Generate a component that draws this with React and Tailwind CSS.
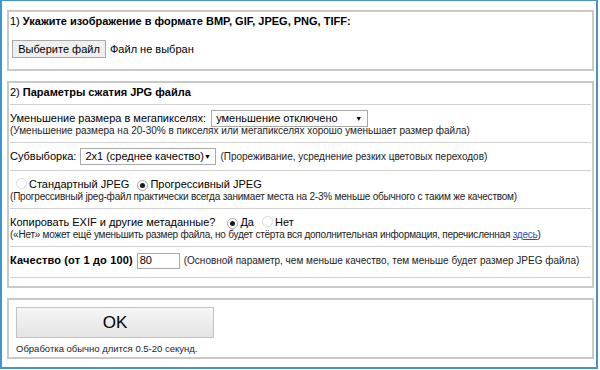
import React from 'react';

const Radio = ({ checked }) => (
    <span
        className={`inline-flex h-[11px] w-[11px] shrink-0 items-center justify-center rounded-full border bg-white ${
            checked ? 'border-[#a8a8a8]' : 'border-[#dadada]'
        }`}
    >
        {checked && <span className="h-[5px] w-[5px] rounded-full bg-[#1a1a1a]" />}
    </span>
);

const Select = ({ value, className }) => (
    <span
        className={`inline-flex h-[17px] items-center justify-between whitespace-nowrap border border-[#a9a9a9] bg-white pl-[4px] pr-[5px] ${className}`}
    >
        <span>{value}</span>
        <span className="text-[7px] leading-none">▼</span>
    </span>
);

const Hint = ({ children, className = '' }) => (
    <div className={`text-[10px] leading-[12px] text-[#222] ${className}`}>{children}</div>
);

export default function App() {
    return (
        <div className="h-[370px] w-[600px] bg-white">
            <div className="flex h-[369px] w-[598px] flex-col gap-[10px] border-2 border-t border-[#4a93c8] pl-[5px] pr-[2px] pt-[9px] font-['Liberation_Sans',Arial,sans-serif] text-[11px] leading-[13px] text-black">
                {/* step 1 */}
                <div className="h-[61px] border-2 border-[#c9c9c9] px-[1px] pt-[3px]">
                    <div>
                        1) <b>Укажите изображение в формате BMP, GIF, JPEG, PNG, TIFF:</b>
                    </div>
                    <div className="ml-[2px] mt-[12px] flex items-center">
                        <span className="flex h-[18px] w-[94px] items-center justify-center border border-[#a9a9a9] bg-[#efefef]">
                            Выберите файл
                        </span>
                        <span className="ml-[4px]">Файл не выбран</span>
                    </div>
                </div>

                {/* step 2 */}
                <div className="h-[207px] border-2 border-[#c9c9c9] px-[1px]">
                    <div className="border-b border-[#d2d2d2] pb-[5px] pt-[3px]">
                        2) <b>Параметры сжатия JPG файла</b>
                    </div>

                    <div className="border-b border-[#d2d2d2] pb-[5px] pt-[5px]">
                        <div className="flex h-[17px] items-center">
                            <span>Уменьшение размера в мегапикселях:</span>
                            <Select value="уменьшение отключено" className="ml-[5px] w-[157px]" />
                        </div>
                        <Hint className="-mt-[2px]">
                            (Уменьшение размера на 20-30% в пикселях или мегапикселях хорошо уменьшает размер файла)
                        </Hint>
                    </div>

                    <div className="flex h-[28px] items-center border-b border-[#d2d2d2]">
                        <span>Субвыборка:</span>
                        <Select value="2x1 (среднее качество)" className="ml-[4px] w-[136px]" />
                        <span className="ml-[4px] text-[10px] text-[#222]">
                            (Прореживание, усреднение резких цветовых переходов)
                        </span>
                    </div>

                    <div className="border-b border-[#d2d2d2] pb-[5px] pt-[7px]">
                        <div className="flex h-[13px] items-center">
                            <span className="ml-[6px] mr-[2px]">
                                <Radio />
                            </span>
                            <span>Стандартный JPEG</span>
                            <span className="ml-[8px] mr-[2px]">
                                <Radio checked />
                            </span>
                            <span>Прогрессивный JPEG</span>
                        </div>
                        <Hint className="tracking-[-0.2px]">
                            (Прогрессивный jpeg-файл практически всегда занимает места на 2-3% меньше обычного с таким же качеством)
                        </Hint>
                    </div>

                    <div className="border-b border-[#d2d2d2] pb-[5px] pt-[7px]">
                        <div className="flex h-[13px] items-center">
                            <span>Копировать EXIF и другие метаданные?</span>
                            <span className="ml-[12px] mr-[2px]">
                                <Radio checked />
                            </span>
                            <span>Да</span>
                            <span className="ml-[8px] mr-[2px]">
                                <Radio />
                            </span>
                            <span>Нет</span>
                        </div>
                        <Hint className="tracking-[-0.24px]">
                            («Нет» может ещё уменьшить размер файла, но будет стёрта вся дополнительная информация, перечисленная{' '}
                            <a href="#" className="text-[#2a4fc4] underline">
                                здесь
                            </a>
                            )
                        </Hint>
                    </div>

                    <div className="border-b border-[#d2d2d2] pb-[8px] pt-[5px]">
                        <div className="flex h-[17px] items-center">
                            <b className="tracking-[0.15px]">Качество (от 1 до 100)</b>
                            <span className="ml-[4px] flex h-[16px] w-[43px] items-center border border-[#a9a9a9] px-[2px]">
                                80
                            </span>
                            <span className="ml-[4px] text-[10px] text-[#222]">
                                (Основной параметр, чем меньше качество, тем меньше будет размер JPEG файла)
                            </span>
                        </div>
                    </div>
                </div>

                {/* submit */}
                <div className="h-[61px] border-2 border-[#c9c9c9] px-[7px] pt-[7px]">
                    <button className="flex h-[31px] w-[198px] items-center justify-center border border-[#c2c2c2] bg-gradient-to-b from-[#f6f6f6] to-[#e4e4e4] text-[17px]">
                        OK
                    </button>
                    <div className="mt-[5px] text-[9.5px] leading-[12px] text-[#222]">
                        Обработка обычно длится 0.5-20 секунд.
                    </div>
                </div>
            </div>
        </div>
    );
}
